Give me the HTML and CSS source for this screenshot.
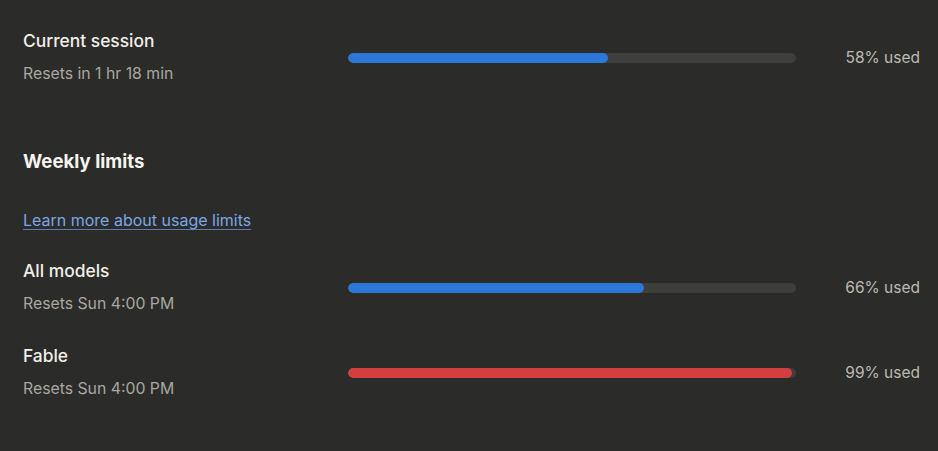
FILE: index.html
```html
<!DOCTYPE html>
<html lang="en">
<head>
<meta charset="utf-8">
<title>Usage</title>
<link rel="stylesheet" href="styles.css">
</head>
<body>
<main class="usage">
  <section class="row">
    <div class="info">
      <div class="title">Current session</div>
      <div class="sub">Resets in 1 hr 18 min</div>
    </div>
    <div class="track"><div class="fill" style="width:58%"></div></div>
    <div class="pct">58% used</div>
  </section>

  <h2 class="heading">Weekly limits</h2>
  <a class="link" href="#">Learn more about usage limits</a>

  <section class="row">
    <div class="info">
      <div class="title">All models</div>
      <div class="sub">Resets Sun 4:00 PM</div>
    </div>
    <div class="track"><div class="fill" style="width:66%"></div></div>
    <div class="pct">66% used</div>
  </section>

  <section class="row row-next">
    <div class="info">
      <div class="title">Fable</div>
      <div class="sub">Resets Sun 4:00 PM</div>
    </div>
    <div class="track"><div class="fill fill-danger" style="width:99%"></div></div>
    <div class="pct">99% used</div>
  </section>
</main>
</body>
</html>
```

FILE: styles.css
```css
html, body {
  margin: 0;
  padding: 0;
  background: #2b2b29;
  height: 100%;
}

body {
  font-family: "Inter", "Noto Sans", sans-serif;
  color: #f1efe8;
}

.usage {
  display: flex;
  flex-direction: column;
  align-items: flex-start;
  padding: 29px 18px 0 23px;
}

.row {
  display: flex;
  align-items: center;
  width: 100%;
}

.row-next {
  margin-top: 28px;
}

.info {
  width: 325px;
  display: flex;
  flex-direction: column;
  gap: 9px;
}

.title {
  font-size: 17.4px;
  line-height: 24px;
  font-weight: 500;
  color: #f1efe8;
}

.sub {
  font-size: 15.8px;
  line-height: 24px;
  color: #a9a79f;
}

.track {
  width: 448px;
  height: 10px;
  border-radius: 5px;
  background: #3e3e3c;
  overflow: hidden;
}

.fill {
  height: 100%;
  border-radius: 5px;
  background: #2c78d8;
}

.fill-danger {
  background: #d23f3f;
}

.pct {
  flex: 1;
  text-align: right;
  font-size: 15.5px;
  color: #bcbab3;
}

.heading {
  margin: 62px 0 0;
  font-size: 18.6px;
  line-height: 26px;
  font-weight: 700;
  color: #f6f4ee;
}

.link {
  margin: 34px 0 27px;
  font-size: 16px;
  line-height: 24px;
  color: #7aa7e2;
  text-decoration: underline;
  text-decoration-color: #5a7fae;
  text-underline-offset: 3px;
}
```
